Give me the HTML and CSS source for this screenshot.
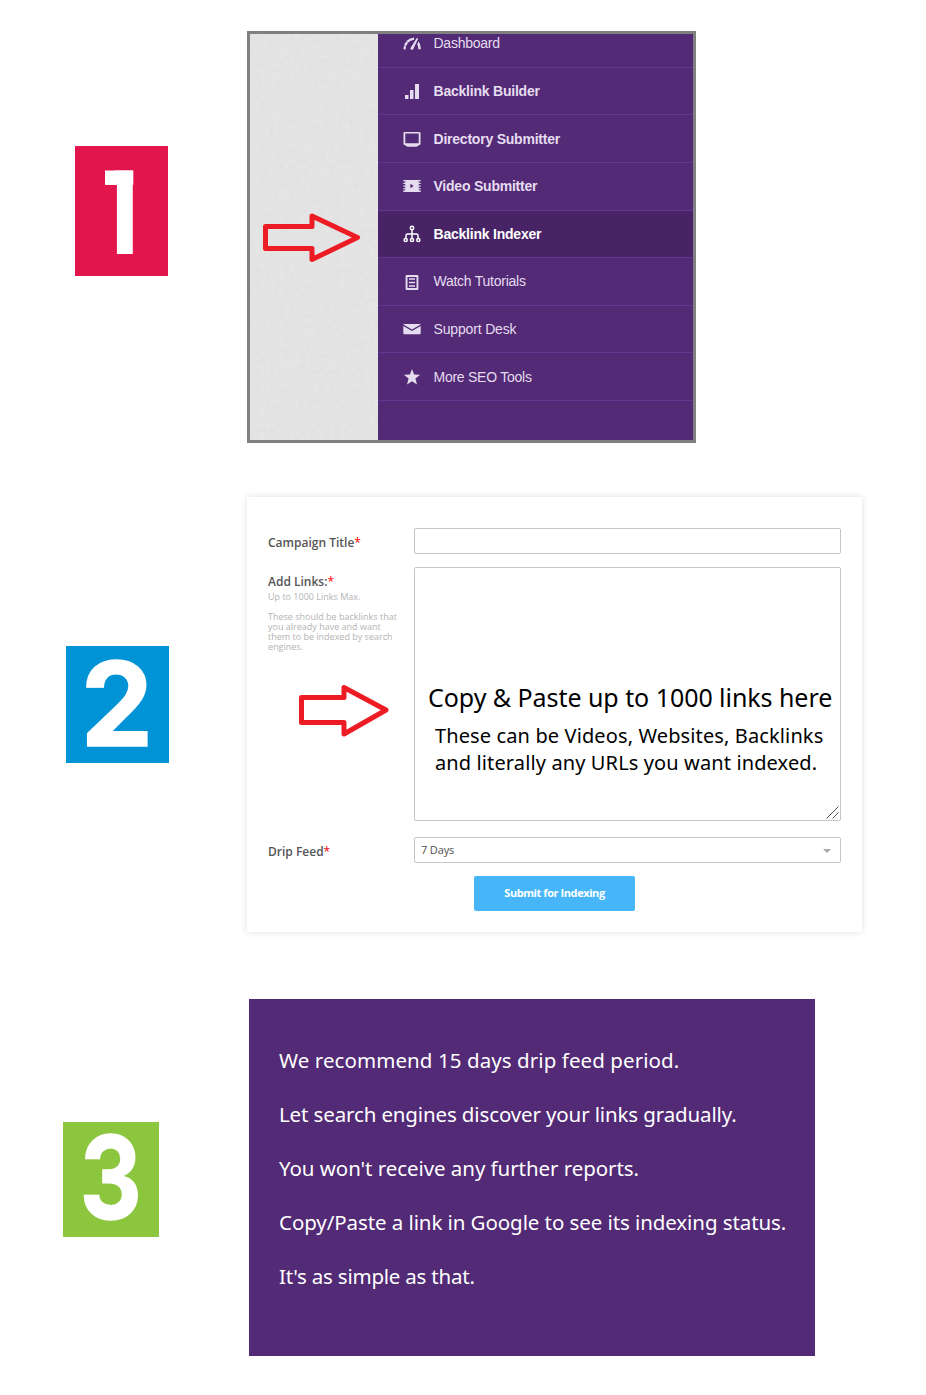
FILE: index.html
```html
<!DOCTYPE html>
<html lang="en">
<head>
<meta charset="utf-8">
<title>Backlink Indexer steps</title>
<link rel="stylesheet" href="styles.css">
</head>
<body>
<main class="steps">
  <section class="step step-one">
    <div class="badge badge-one"><svg viewBox="0 0 93 130"><clipPath id="flag"><path d="M30 24.500H58.300V108.500H41.700V38.800H30Z"/></clipPath><g clip-path="url(#flag)"><text class="digit" transform="translate(18.400 108) scale(.93 1)" font-size="115.5">1</text></g><rect x="30" y="24.500" width="28.300" height="14.300" fill="#fff"/></svg></div>
    <div class="panel-menu">
      <div class="canvas">
        <svg class="grain" width="128" height="406"><filter id="paper" x="0" y="0" width="100%" height="100%" color-interpolation-filters="sRGB"><feTurbulence type="fractalNoise" baseFrequency=".2" numOctaves="2" seed="4"/><feColorMatrix values=".03 0 0 0 .877  .03 0 0 0 .877  .03 0 0 0 .877  0 0 0 0 1"/></filter><rect width="128" height="406" filter="url(#paper)"/></svg>
        <svg class="arrow arrow-menu" width="102" height="54" viewBox="0 0 102 54"><path d="M5.5 16.5H52V6L97.500 27.500L52 49.500V38.500H5.500Z"/></svg>
      </div>
      <ul class="menu">
        <li class="raised"><svg viewBox="0 0 18 18"><path d="M1.500 15.300C2 9 5.500 5.300 11 4.600" fill="none" stroke="currentColor" stroke-width="2.200"/><path d="M3.800 7.200l1.800 2M1 11.500l2.400.8" stroke="#522a75" stroke-width=".5"/><path d="M13.800 4l1.400.6-5 10.600c-1 1.300-3.100.3-2.700-1.300ZM15.600 7.400c1.500 2 2.200 4.800 2.200 7.900h-2.500c0-2.400-.4-4-1.200-5.300Z"/></svg><span>Dashboard</span></li>
        <li class="strong"><svg viewBox="0 0 18 18"><path d="M2 13h3.500v4H2zM7 8h3.500v9H7zM12 2h4v15h-4z"/></svg><span>Backlink Builder</span></li>
        <li class="strong"><svg viewBox="0 0 18 18"><path d="M1.700 2h14.600q1.200 0 1.200 1.200v10.600q0 1.200-1.200 1.200L13.500 16.700h-9L1.700 15Q.5 15 .5 13.800V3.200Q.5 2 1.700 2ZM2.300 3.600v9.700h13.400V3.600Z" fill-rule="evenodd"/></svg><span>Directory Submitter</span></li>
        <li class="strong raised"><svg viewBox="0 0 18 18"><path fill-rule="evenodd" d="M.3 3h17.400v1.300h-2v1.400h2V7h-2v1.400h2v1.400h-2v1.400h2v1.400h-2v1h2V15H.3v-1.400h2v-1h-2v-1.400h2V9.800h-2V8.400h2V7h-2V5.700h2V4.300h-2ZM7.400 6.800v4.400L10.700 9Z"/></svg><span>Video Submitter</span></li>
        <li class="strong active"><svg viewBox="0 0 18 18"><g fill="none" stroke="currentColor" stroke-width="1.500"><circle cx="9" cy="3" r="1.700"/><path d="M9 4.700v8.500M3 13V10.500Q3 9 4.500 9h9Q15 9 15 10.500V13"/><circle cx="2.700" cy="15" r="1.600"/><circle cx="9" cy="15" r="1.600"/><circle cx="15.300" cy="15" r="1.600"/></g></svg><span>Backlink Indexer</span></li>
        <li class="raised"><svg viewBox="0 0 18 18"><path fill-rule="evenodd" d="M3.600 3h10.800q1 0 1 1v13q0 1-1 1H3.600q-1 0-1-1V4q0-1 1-1ZM4.500 4.900v11.200h9V4.900Z"/><path d="M6 6.200h6v1.600H6zm0 3.500h6v1.600H6zm0 3.500h6v1.600H6z"/></svg><span>Watch Tutorials</span></li>
        <li class="support"><svg viewBox="0 0 18 18"><path d="M1.200 4h15.600q.9 0 .9.600L9 9.400.3 4.600Q.3 4 1.200 4ZM.3 6.100L9 10.900l8.700-4.800v7.200q0 1-1 1H1.300q-1 0-1-1Z"/></svg><span>Support Desk</span></li>
        <li><svg viewBox="0 0 18 18"><path d="M9 .9l2.100 5.700 6 .2-4.700 3.700 1.600 6L9 13.200l-5 3.300 1.600-6L.9 6.800l6-.2Z"/></svg><span>More SEO Tools</span></li>
      </ul>
    </div>
  </section>

  <section class="step step-two">
    <div class="badge badge-two"><svg viewBox="0 0 103 117"><text class="digit heavy" transform="translate(14.700 99.500) scale(.99 1)" font-size="116">2</text></svg></div>
    <form class="panel-form">
      <div class="label label-title">Campaign Title<b>*</b></div>
      <div class="field"></div>
      <div class="label label-links">Add Links:<b>*</b>
        <p class="hint hint-first">Up to 1000 Links Max.</p>
        <p class="hint hint-more">These should be backlinks that<br>you already have and want<br>them to be indexed by search<br>engines.</p>
        <svg class="arrow arrow-form" width="94" height="56" viewBox="0 0 94 56"><path d="M4.500 15.500H47V5.500L89 28L47 52V40.500H4.500Z"/></svg>
      </div>
      <div class="field area">
        <p class="big"><span>Copy &amp; Paste up to 1000 links here</span></p>
        <p class="small"><span>These can be Videos, Websites, Backlinks</span><br><span>and literally any URLs you want indexed.</span></p>
        <svg class="grip" width="13" height="13" viewBox="0 0 13 13"><path d="M.5 12.500L12.500.5M6.500 12.500L12.500 6.500"/></svg>
      </div>
      <div class="label label-drip">Drip Feed<b>*</b></div>
      <div class="field select"><span>7 Days</span><i class="caret"></i></div>
      <button class="submit" type="button">Submit for Indexing</button>
    </form>
  </section>

  <section class="step step-three">
    <div class="badge badge-three"><svg viewBox="0 0 96 115"><text class="digit heavy" transform="translate(16.800 96.800) scale(.835 1)" font-size="115">3</text></svg></div>
    <div class="panel-notes">
      <p class="n1">We recommend 15 days drip feed period.</p>
      <p class="n2">Let search engines discover your links gradually.</p>
      <p class="n3">You won't receive any further reports.</p>
      <p class="n4">Copy/Paste a link in Google to see its indexing status.</p>
      <p class="n5">It's as simple as that.</p>
    </div>
  </section>
</main>
</body>
</html>
```
FILE: styles.css
```css
* { box-sizing: border-box; }
body { margin: 0; background: #fff; font-family: "Open Sans", sans-serif; }
p, ul { margin: 0; padding: 0; }
.steps { width: 926px; height: 1395px; padding-top: 31px; overflow: hidden; }
.step { display: flex; align-items: flex-start; }
.badge { flex: none; }
.badge svg { display: block; overflow: visible; }
.digit { fill: #fff; font-family: Inter, sans-serif; font-weight: 700; }
.heavy { stroke: #fff; stroke-width: 1.5; }
.badge-one { width: 93px; height: 130px; margin: 115px 79px 0 75px; background: #e2154c; }
.badge-two { width: 103px; height: 117px; margin: 149px 78px 0 66px; background: #0093d5; }
.badge-three { width: 96px; height: 115px; margin: 123px 90px 0 63px; background: #8cc63f; }

.panel-menu { display: flex; width: 449px; height: 412px; border: 3px solid #808080; overflow: hidden; }
.canvas { position: relative; width: 128px; background: #e3e3e3; }
.grain { display: block; }
.arrow { position: absolute; fill: none; stroke: #ed1c24; stroke-width: 5; stroke-linejoin: round; }
.arrow-menu { left: 10px; top: 176px; }
.menu { display: grid; grid-template-rows: 48px 47px 48px 48px 47px 48px 47px 48px; flex: 1; height: 420px; margin-top: -14px; list-style: none; background: #522a75; color: #e6dcf0; font: 14px "Liberation Sans", sans-serif; letter-spacing: -.25px; }
.menu li { display: flex; align-items: center; padding-left: 25px; border-bottom: 1px solid #633791; }
.menu svg { width: 18px; height: 18px; margin-right: 12.500px; fill: currentColor; }
.menu .strong { font-weight: 700; letter-spacing: -.22px; }
.menu .support { letter-spacing: -.16px; }
.menu .raised { padding-bottom: 2px; }
.menu .active { background: #482466; color: #fff; }

.step-two { margin-top: 54px; }
.panel-form { display: grid; grid-template-columns: 146px 427px; align-items: start; align-content: start; width: 615px; height: 435px; padding: 31px 21px 0; background: #fff; box-shadow: 0 0 7px rgba(0,0,0,.13); }
.label { position: relative; color: #555; font-size: 12px; font-weight: 600; line-height: 16px; }
.label b { color: #f00; font-weight: 400; }
.label-title { padding-top: 7px; }
.label-links { margin-top: 13px; padding-top: 7px; }
.label-drip { margin-top: 16px; padding-top: 7px; }
.hint { color: #b3b3b3; font-size: 9px; font-weight: 400; line-height: 10px; white-space: nowrap; }
.hint-first { padding-top: 2px; }
.hint-more { margin-top: 10px; }
.arrow-form { left: 29px; top: 114.500px; }
.field { height: 26px; border: 1px solid #c5c5c5; border-radius: 2px; background: #fff; }
.area { position: relative; height: 254px; margin-top: 13px; padding: 112px 0 0 13px; color: #000; font-family: "Noto Sans", sans-serif; white-space: nowrap; }
.big { font-size: 25px; line-height: 34px; letter-spacing: -.05px; }
.small { padding: 8px 0 0 7px; font-size: 20px; line-height: 27px; letter-spacing: .12px; }
.grip { position: absolute; right: 1px; bottom: 1px; stroke: #555; stroke-width: 1; }
.select { display: flex; align-items: center; justify-content: space-between; margin-top: 16px; padding: 0 9px 1px 6px; color: #505050; font-size: 11px; letter-spacing: -.15px; }
.caret { margin-top: 2px; border: 4px solid transparent; border-top-color: #aaa; border-bottom: 0; }
.submit { grid-column: 1 / -1; width: 161px; height: 35px; margin: 13px 0 0 206px; padding: 0 0 2px; border: 0; border-radius: 2px; background: #47b6f9; color: #fff; font: 700 11px "Open Sans", sans-serif; letter-spacing: -.42px; }

.step-three { margin-top: 67px; }
.panel-notes { width: 566px; height: 357px; padding: 34px 0 0 30px; background: #522a75; color: #fff; font: 20.500px/54px "Noto Sans", sans-serif; white-space: nowrap; }
.n1 { letter-spacing: .08px; }
.n2 { letter-spacing: -.13px; }
.n3 { letter-spacing: -.06px; }
.n4 { letter-spacing: -.08px; }
.n5 { letter-spacing: -.22px; }
```
